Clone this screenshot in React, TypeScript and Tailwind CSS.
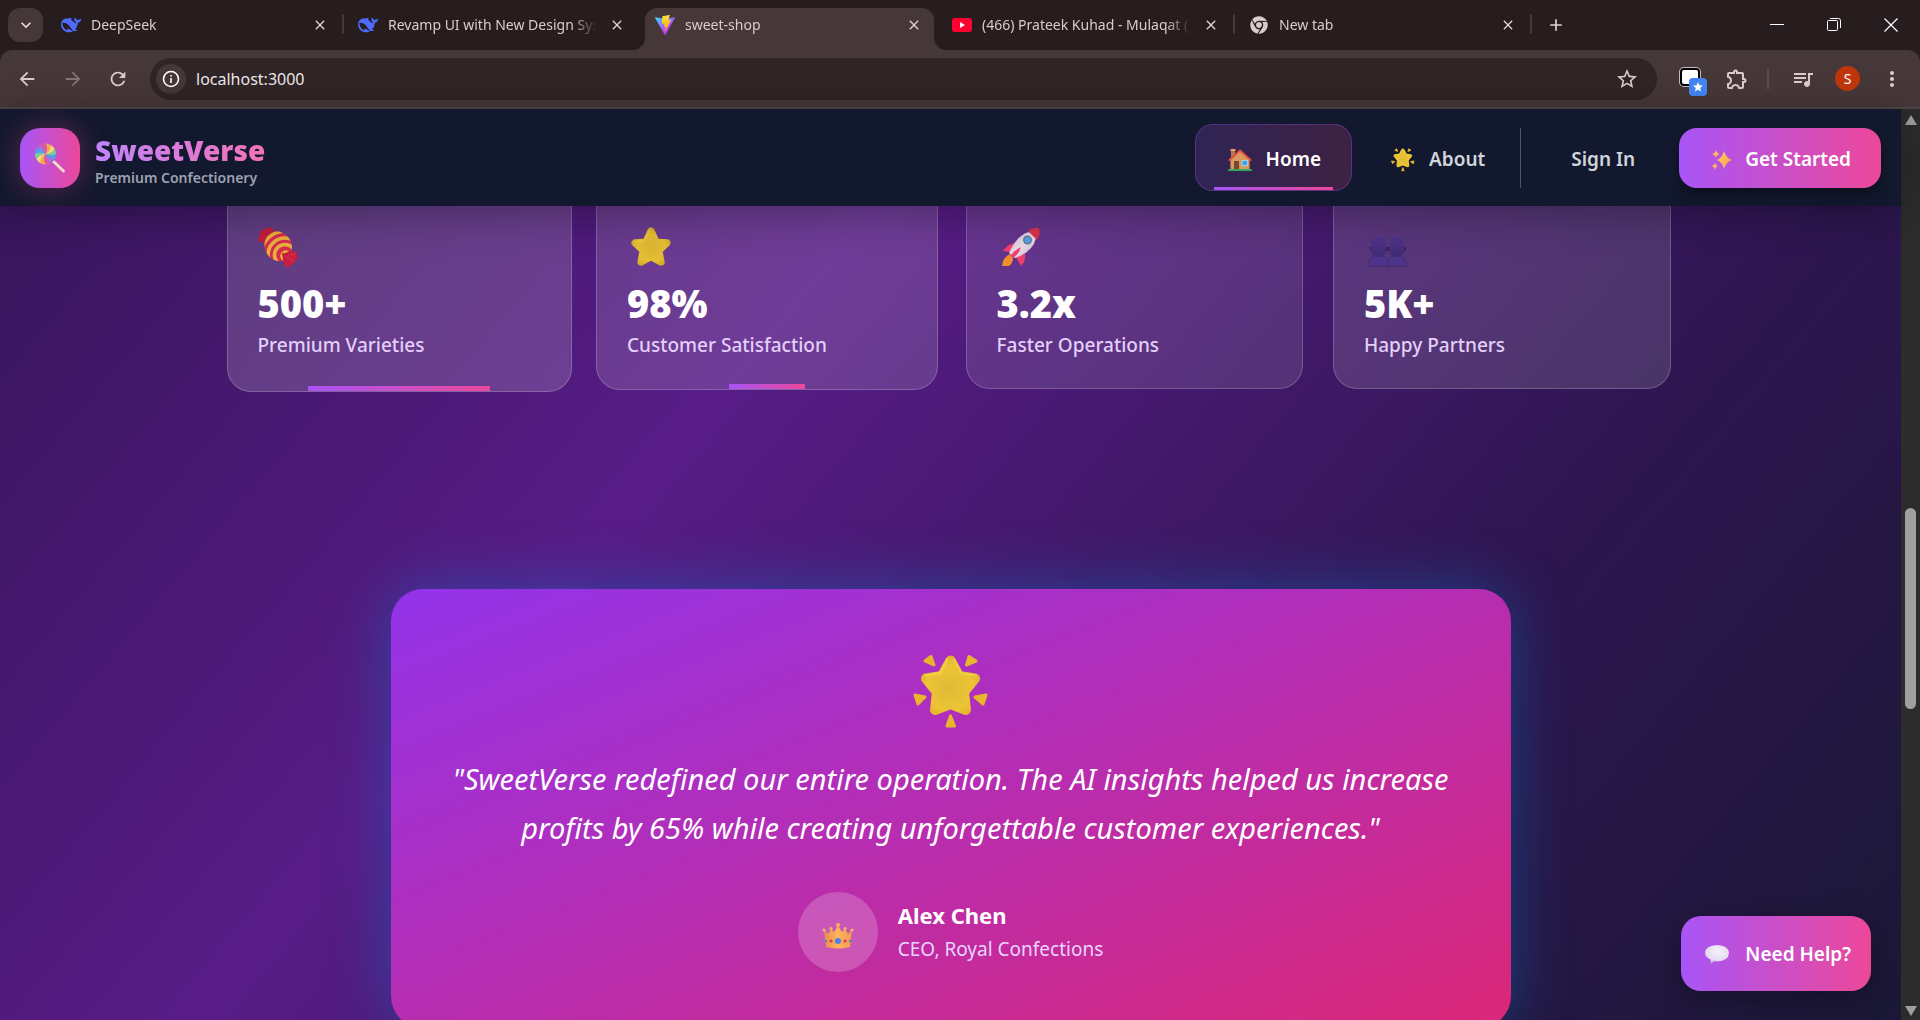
import React from "react";
import { FaChrome } from "react-icons/fa";
import {
  MdAdd,
  MdArrowBack,
  MdArrowForward,
  MdClose,
  MdExpandMore,
  MdMoreVert,
  MdOutlineExtension,
  MdQueueMusic,
  MdRefresh,
  MdStar,
  MdStarBorder,
} from "react-icons/md";

type IconProps = { className?: string };

/* ---------- Brand marks ---------- */

function WhaleIcon({ className }: IconProps) {
  return (
    <svg viewBox="0 0 24 24" className={className} fill="#4d6bfe" aria-hidden="true">
      <path d="M23.748 4.482c-.254-.124-.364.113-.512.234-.051.039-.094.09-.137.136-.372.397-.806.657-1.373.626-.829-.046-1.537.214-2.163.848-.133-.782-.575-1.248-1.247-1.548-.352-.156-.708-.311-.955-.65-.172-.241-.219-.51-.305-.774-.055-.16-.11-.323-.293-.35-.2-.031-.278.136-.356.276-.313.572-.434 1.202-.422 1.84.027 1.436.633 2.58 1.838 3.393.137.093.172.187.129.323-.082.28-.18.552-.266.833-.055.179-.137.217-.329.14a5.526 5.526 0 01-1.736-1.18c-.857-.828-1.631-1.742-2.597-2.458a11.365 11.365 0 00-.689-.471c-.985-.957.13-1.743.388-1.836.27-.098.093-.432-.779-.428-.872.004-1.67.295-2.687.684a3.055 3.055 0 01-.465.137 9.597 9.597 0 00-2.883-.102c-1.885.21-3.39 1.102-4.497 2.623C.082 8.606-.231 10.684.152 12.85c.403 2.284 1.569 4.175 3.36 5.653 1.858 1.533 3.997 2.284 6.438 2.14 1.482-.085 3.133-.284 4.994-1.86.47.234.962.327 1.78.397.63.059 1.236-.03 1.705-.128.735-.156.684-.837.419-.961-2.155-1.004-1.682-.595-2.113-.926 1.096-1.296 2.746-2.642 3.392-7.003.05-.347.007-.565 0-.845-.004-.17.035-.237.23-.256a4.173 4.173 0 001.545-.475c1.396-.763 1.96-2.015 2.093-3.517.02-.23-.004-.467-.247-.588zM11.581 18c-2.089-1.642-3.102-2.183-3.52-2.16-.392.024-.321.471-.235.763.09.288.207.486.371.739.114.167.192.416-.113.603-.673.416-1.842-.14-1.897-.167-1.361-.802-2.5-1.86-3.301-3.307-.774-1.393-1.224-2.887-1.298-4.482-.02-.386.093-.522.477-.592a4.696 4.696 0 011.529-.039c2.132.312 3.946 1.265 5.468 2.774.868.86 1.525 1.887 2.202 2.891.72 1.066 1.494 2.082 2.48 2.914.348.292.625.514.891.677-.802.09-2.14.11-3.054-.614z" />
    </svg>
  );
}

function ViteIcon({ className }: IconProps) {
  return (
    <svg viewBox="0 0 256 257" className={className} aria-hidden="true">
      <defs>
        <linearGradient id="vite-a" x1="0" x2=".58" y1=".08" y2=".78">
          <stop offset="0" stopColor="#41d1ff" />
          <stop offset="1" stopColor="#bd34fe" />
        </linearGradient>
        <linearGradient id="vite-b" x1=".43" x2=".5" y1=".02" y2=".89">
          <stop offset="0" stopColor="#ffea83" />
          <stop offset=".08" stopColor="#ffdd35" />
          <stop offset="1" stopColor="#ffa800" />
        </linearGradient>
      </defs>
      <path
        fill="url(#vite-a)"
        d="M255.153 37.938L134.897 252.976c-2.483 4.44-8.862 4.466-11.382.048L.875 37.958c-2.746-4.814 1.371-10.646 6.827-9.67l120.385 21.517a6.537 6.537 0 0 0 2.322-.004l117.867-21.483c5.438-.991 9.574 4.796 6.877 9.62Z"
      />
      <path
        fill="url(#vite-b)"
        d="M185.432.063L96.44 17.501a3.268 3.268 0 0 0-2.634 3.014l-5.474 92.456a3.268 3.268 0 0 0 3.997 3.378l24.777-5.718c2.318-.535 4.413 1.507 3.936 3.838l-7.361 36.047c-.495 2.426 1.782 4.5 4.151 3.78l15.304-4.649c2.372-.72 4.652 1.36 4.15 3.788l-11.698 56.621c-.732 3.542 3.979 5.473 5.943 2.437l1.313-2.028l72.516-144.72c1.215-2.423-.88-5.186-3.54-4.672l-25.505 4.922c-2.396.462-4.435-1.77-3.759-4.114l16.646-57.705c.677-2.35-1.37-4.583-3.769-4.113Z"
      />
    </svg>
  );
}

function YouTubeIcon({ className }: IconProps) {
  return (
    <svg viewBox="0 0 20 20" className={className} aria-hidden="true">
      <rect y="3" width="20" height="14" rx="3" fill="#ff0033" />
      <path d="M8 7l5 3-5 3z" fill="#fff" />
    </svg>
  );
}

/* ---------- Illustrated emoji ---------- */

const STAR = "M50 14L61 38L85 40L67 57L72 82L50 70L28 82L33 57L15 40L39 38Z";

function StarArt({ className }: IconProps) {
  return (
    <svg viewBox="6 6 88 86" className={className} aria-hidden="true">
      <defs>
        <radialGradient id="star-fill" gradientUnits="userSpaceOnUse" cx="50" cy="50" r="44">
          <stop offset="0" stopColor="#dab534" />
          <stop offset=".7" stopColor="#e6bf33" />
          <stop offset="1" stopColor="#d9aa2b" />
        </radialGradient>
      </defs>
      <path d={STAR} fill="url(#star-fill)" stroke="url(#star-fill)" strokeWidth="16" strokeLinejoin="round" />
      <path d="M47 12L36 35L13 38" fill="none" stroke="#f3d040" strokeWidth="4" strokeLinecap="round" opacity=".5" />
    </svg>
  );
}

function GlowingStarArt({ className }: IconProps) {
  return (
    <svg viewBox="0 0 76 76" className={className} aria-hidden="true">
      <defs>
        <radialGradient id="glow-fill" gradientUnits="userSpaceOnUse" cx="37" cy="34" r="33">
          <stop offset="0" stopColor="#dfba37" />
          <stop offset=".7" stopColor="#ecc435" />
          <stop offset="1" stopColor="#e0b02c" />
        </radialGradient>
      </defs>
      <path
        d="M37.500 6.500L46 22L62 24.500L51 38L53 56L37.500 50L22 56L24 38L13 24.500L29 22Z"
        fill="url(#glow-fill)"
        stroke="url(#glow-fill)"
        strokeWidth="10"
        strokeLinejoin="round"
      />
      <path d="M34.500 5L28 19L12 21.500" fill="none" stroke="#f8da50" strokeWidth="2" strokeLinecap="round" opacity=".6" />
      <path d="M41 5L48 19L63 21.500" fill="none" stroke="#f8da50" strokeWidth="2" strokeLinecap="round" opacity=".5" />
      <g fill="#e8b62c" stroke="#e8b62c" strokeWidth="3" strokeLinejoin="round">
        <path d="M12 7L18 2.500L21 11Z" />
        <path d="M63 7L56 2.500L53.500 11Z" />
        <path d="M2 41L12 43L5 50Z" />
        <path d="M73 41L62 43L70 50Z" />
        <path d="M37.500 62L34 72H41.500Z" />
      </g>
    </svg>
  );
}

function LollipopArt({ className }: IconProps) {
  const colors = ["#f2a94f", "#f6dc72", "#73d39a", "#4d9ff0", "#a46ee0", "#e0559b"];
  return (
    <svg viewBox="0 0 32 32" className={className} aria-hidden="true">
      <path d="M19 19L29.500 29" stroke="#f5dcc8" strokeWidth="2.800" strokeLinecap="round" />
      <circle cx="11.500" cy="12" r="10.500" fill="#cf6bb0" />
      {Array.from({ length: 12 }, (_, i) => (
        <path
          key={i}
          d="M11.500 12Q14.500 7 11.500 1.500Q14.500 1.500 16.900 3Q17 8 11.500 12Z"
          fill={colors[i % 6]}
          transform={`rotate(${i * 30} 11.5 12)`}
        />
      ))}
    </svg>
  );
}

function HouseArt({ className }: IconProps) {
  return (
    <svg viewBox="0 0 24 24" className={className} aria-hidden="true">
      <rect x="3" y="2" width="4" height="9" fill="#b9774f" />
      <rect x="2.500" y="1" width="5" height="2" fill="#f5a05a" />
      <path d="M2.500 11L12 3L21.500 11V21.500H2.500Z" fill="#d99a62" />
      <path d="M1.500 12L12 2.500L22.500 12" fill="none" stroke="#e2513f" strokeWidth="2" strokeLinecap="round" strokeLinejoin="round" />
      <rect x="6" y="13" width="5" height="8.500" fill="#75482f" />
      <rect x="14" y="12.500" width="5.500" height="5" fill="#35a3ee" stroke="#b5dcf5" strokeWidth=".8" />
      <rect x="0" y="21" width="24" height="2" rx="1" fill="#39a85e" />
    </svg>
  );
}

function SparklesArt({ className }: IconProps) {
  return (
    <svg viewBox="0 0 22 20" className={className} aria-hidden="true">
      <defs>
        <linearGradient id="spark" x1="0" x2="1" y1="0" y2="1">
          <stop offset="0" stopColor="#ffd35c" />
          <stop offset="1" stopColor="#fb9a55" />
        </linearGradient>
      </defs>
      <g fill="url(#spark)">
        <path d="M13 1Q15 8 21 10Q15 12 13 19Q11 12 6 10Q11 8 13 1Z" />
        <path d="M5 0Q6 3.500 9 4Q6 4.500 5 8Q4 4.500 1 4Q4 3.500 5 0Z" />
        <path d="M4 13Q5 15.500 7 16Q5 16.500 4 19.500Q3 16.500 1 16Q3 15.500 4 13Z" />
      </g>
    </svg>
  );
}

function CandyArt({ className }: IconProps) {
  return (
    <svg viewBox="0 0 40 40" className={className} aria-hidden="true">
      <defs>
        <clipPath id="candy-clip">
          <ellipse cx="20.500" cy="19.500" rx="13.500" ry="15" transform="rotate(-25 20 20)" />
        </clipPath>
      </defs>
      <path d="M2 4Q5 5 7 1Q10 0 15 1Q17 6 14 12L7 17Q5 14 1 15Q-1 11 2 10Q1 7 2 4Z" fill="#bf1f3e" />
      <g clipPath="url(#candy-clip)">
        <rect width="40" height="40" fill="#d62d50" />
        <g fill="none" stroke="#e9b03c" strokeWidth="3.600">
          <circle cx="28" cy="29" r="4" />
          <circle cx="27" cy="28" r="10.500" />
          <circle cx="27" cy="28" r="17" />
          <circle cx="27" cy="28" r="24" />
        </g>
      </g>
      <path d="M24 26Q28 27 31 24Q34 25 39 24Q38 27 40 30Q40 33 37 33Q38 37 34 37Q31 41 28 40Q25 35 25 32Z" fill="#c81f40" />
      <path d="M27 29L35 34M30 28L38 27" stroke="#e2485c" opacity=".6" />
    </svg>
  );
}

function RocketArt({ className }: IconProps) {
  return (
    <svg viewBox="0 0 40 40" className={className} aria-hidden="true">
      <defs>
        <linearGradient id="rocket" x1="0" x2="1" y1="0" y2="1">
          <stop offset="0" stopColor="#c9b9c9" />
          <stop offset=".5" stopColor="#e7dbe6" />
          <stop offset="1" stopColor="#cbb6cc" />
        </linearGradient>
      </defs>
      <path d="M9 27Q2 30 1 39Q4 39 8 39Q12 36 12 31Z" fill="#f08d2c" />
      <path d="M13 16Q6 18 2 24L11 25Z" fill="#f23d6f" />
      <path d="M24 27Q25 34 20 39L15 30Z" fill="#f23d6f" />
      <path d="M28 5Q16 8 8 26L14 31Q32 25 35 11Z" fill="url(#rocket)" />
      <path d="M27 4Q33 0 38 1Q40 7 36 13Z" fill="#d93349" />
      <path d="M20 20Q12 24 9 29L12 31Q18 27 20 20Z" fill="#f23d6f" />
      <circle cx="26.500" cy="13" r="4.500" fill="#6a7796" />
      <circle cx="26.500" cy="13" r="3" fill="#50a5ec" />
    </svg>
  );
}

function PeopleArt({ className }: IconProps) {
  return (
    <svg viewBox="0 0 40 40" className={className} aria-hidden="true">
      <defs>
        <linearGradient id="people" x1="0" x2="0" y1="0" y2="1">
          <stop offset="0" stopColor="#4f338b" />
          <stop offset="1" stopColor="#402b74" />
        </linearGradient>
      </defs>
      <path d="M1 20h4v4H3zM17 20h5v4h-4zM34 20h4v3l-3 1z" fill="#37235f" />
      <g fill="url(#people)">
        <rect x="3" y="10" width="15" height="20" rx="7" />
        <rect x="21" y="10" width="15" height="20" rx="7" />
      </g>
      <g fill="#4f348b" stroke="#3e2970" strokeWidth=".8">
        <path d="M1 39V35Q2 30 8 29H13Q20 30 20 35V39Z" />
        <path d="M20 39V35Q21 30 25 29H31Q37 30 38 35V39Z" />
      </g>
    </svg>
  );
}

function CrownArt({ className }: IconProps) {
  return (
    <svg viewBox="0 0 32 26" className={className} aria-hidden="true">
      <defs>
        <linearGradient id="crown" x1="0" x2="1" y1="0" y2="0">
          <stop offset="0" stopColor="#e78c4a" />
          <stop offset=".5" stopColor="#ffb45e" />
          <stop offset="1" stopColor="#f09a52" />
        </linearGradient>
      </defs>
      <path d="M2 7L6 11L9 6L12 9L16 3L20 9L23 6L26 11L30 7L28 24Q16 27 4 24Z" fill="url(#crown)" />
      <g fill="#f1b85f">
        <circle cx="2" cy="7" r="1.600" />
        <circle cx="9" cy="5.500" r="1.600" />
        <circle cx="16" cy="2" r="2" />
        <circle cx="23" cy="5.500" r="1.600" />
        <circle cx="30" cy="7" r="1.600" />
      </g>
      <circle cx="16" cy="18" r="3" fill="#4a83ee" />
      <circle cx="9" cy="18" r="1.600" fill="#dd3950" />
      <circle cx="23" cy="18" r="1.600" fill="#dd3950" />
      <circle cx="4" cy="18" r="1.200" fill="#389aa0" />
      <circle cx="28" cy="18" r="1.200" fill="#389aa0" />
    </svg>
  );
}

function SpeechArt({ className }: IconProps) {
  return (
    <svg viewBox="0 0 24 19" className={className} aria-hidden="true">
      <defs>
        <radialGradient id="speech" cx=".55" cy=".35" r=".7">
          <stop offset="0" stopColor="#f6f0fa" />
          <stop offset=".7" stopColor="#e4dcf0" />
          <stop offset="1" stopColor="#b9a9d6" />
        </radialGradient>
      </defs>
      <path d="M12 0Q23.500 .5 24 8Q23.500 16 12 16.500L9 16Q8 18 5 18.500Q6 16.500 5.500 14.500Q0 12 0 8Q.5 .5 12 0Z" fill="url(#speech)" />
    </svg>
  );
}

/* ---------- Browser frame ---------- */

type TabProps = { title: string; icon: React.ReactNode; active?: boolean; divider?: boolean };

function Tab({ title, icon, active, divider }: TabProps) {
  return (
    <div className="relative flex w-[297px] min-w-0 shrink pt-2">
      <div
        className={
          active
            ? "relative mx-1 flex h-[42px] min-w-0 flex-1 items-center rounded-t-xl bg-[#463739] pb-2 pl-2.5 pr-3"
            : "relative mx-1 flex h-[42px] min-w-0 flex-1 items-center pb-2 pl-2.5 pr-3"
        }
      >
        {active && (
          <>
            <span className="absolute -left-3 bottom-0 size-3 bg-[radial-gradient(circle_at_0_0,transparent_12px,#463739_12px)]" />
            <span className="absolute -right-3 bottom-0 size-3 bg-[radial-gradient(circle_at_100%_0,transparent_12px,#463739_12px)]" />
          </>
        )}
        {icon}
        <span className="ml-2.5 min-w-0 flex-1 overflow-hidden whitespace-nowrap text-sm text-[#dccbcd] [mask-image:linear-gradient(to_right,black_88%,transparent)]">
          {title}
        </span>
        <button type="button" aria-label={"Close " + title} className="ml-3 text-[#e3d3d5]">
          <MdClose className="size-4" />
        </button>
      </div>
      {divider && <span className="absolute right-0 top-3.5 h-5 w-0.5 rounded bg-[#463739]" />}
    </div>
  );
}

function TabStrip() {
  return (
    <div className="flex h-[50px] items-start bg-[#271c1e]">
      <button
        type="button"
        aria-label="Search tabs"
        className="ml-2 mr-1 mt-2 flex h-[34px] w-[35px] shrink-0 items-center justify-center rounded-xl bg-[#463739] text-[#eadcde]"
      >
        <MdExpandMore className="size-5" />
      </button>
      <Tab title="DeepSeek" icon={<WhaleIcon className="size-5 shrink-0" />} divider />
      <Tab title="Revamp UI with New Design Sys" icon={<WhaleIcon className="size-5 shrink-0" />} />
      <Tab title="sweet-shop" icon={<ViteIcon className="size-5 shrink-0" />} active />
      <Tab title="(466) Prateek Kuhad - Mulaqat (" icon={<YouTubeIcon className="size-5 shrink-0" />} divider />
      <Tab title="New tab" icon={<FaChrome className="mx-px size-[18px] shrink-0 text-[#dccbcd]" />} divider />
      <button type="button" aria-label="New tab" className="ml-3.5 mt-[15px] text-[#e3d3d5]">
        <MdAdd className="size-5" />
      </button>
      <div className="ml-auto mr-[18px] flex gap-[35px] pt-3.5 text-white">
        <button type="button" aria-label="Minimize">
          <svg viewBox="0 0 22 22" className="size-[22px]" aria-hidden="true">
            <path d="M4 10.500h14" stroke="currentColor" />
          </svg>
        </button>
        <button type="button" aria-label="Restore">
          <svg viewBox="0 0 22 22" className="size-[22px]" fill="none" stroke="currentColor" aria-hidden="true">
            <rect x="4.500" y="6.500" width="10" height="10" rx="1" />
            <path d="M7 4.500h8.500a2 2 0 0 1 2 2V14" />
          </svg>
        </button>
        <button type="button" aria-label="Close window">
          <svg viewBox="0 0 22 22" className="size-[22px]" aria-hidden="true">
            <path d="M4.500 4.500l13 13M17.500 4.500l-13 13" stroke="currentColor" strokeWidth="1.200" />
          </svg>
        </button>
      </div>
    </div>
  );
}

function Toolbar() {
  return (
    <div className="bg-[#271c1e]">
      <div className="flex h-[59px] items-center rounded-t-xl border-b-2 border-[#4b4545] bg-[#463739] pl-4 text-[#dccbcd]">
        <button type="button" aria-label="Back">
          <MdArrowBack className="size-[22px]" />
        </button>
        <button type="button" aria-label="Forward" className="ml-6 text-[#857476]">
          <MdArrowForward className="size-[22px]" />
        </button>
        <button type="button" aria-label="Reload" className="ml-[23px]">
          <MdRefresh className="size-[22px]" />
        </button>
        <div className="ml-[21px] flex h-[42px] flex-1 items-center rounded-full bg-[#2f2426] pl-1.5 pr-[18px]">
          <button
            type="button"
            aria-label="Site information"
            className="flex size-[30px] shrink-0 items-center justify-center rounded-full bg-[#463739] text-white"
          >
            <svg viewBox="0 0 18 18" className="size-[18px]" fill="none" stroke="currentColor" strokeWidth="1.600" aria-hidden="true">
              <circle cx="9" cy="9" r="7.500" />
              <path d="M9 8v5M9 5v1.600" />
            </svg>
          </button>
          <input
            type="text"
            aria-label="Address"
            defaultValue="localhost:3000"
            className="ml-2.5 min-w-0 flex-1 bg-transparent text-base text-[#efe6e7] outline-none"
          />
          <button type="button" aria-label="Bookmark this page">
            <MdStarBorder className="size-6" />
          </button>
        </div>
        <button type="button" aria-label="Reading extension" className="relative ml-[22px] size-[26px]">
          <span className="absolute left-px top-0.5 h-[18px] w-5 rounded-sm border-2 border-black bg-white ring-1 ring-[#c9bcbe]" />
          <span className="absolute -bottom-1 -right-0.5 flex h-[18px] w-[18px] items-center justify-center rounded bg-[#4285f4] text-white">
            <MdStar className="size-3" />
          </span>
        </button>
        <button type="button" aria-label="Extensions" className="ml-5">
          <MdOutlineExtension className="size-6" />
        </button>
        <span className="ml-[18px] h-5 w-0.5 bg-[#5f4d50]" />
        <button type="button" aria-label="Media controls" className="ml-[22px]">
          <MdQueueMusic className="size-6" />
        </button>
        <button
          type="button"
          aria-label="Profile"
          className="ml-5 flex size-[25px] items-center justify-center rounded-full bg-[#bf360c] text-sm text-white"
        >
          S
        </button>
        <button type="button" aria-label="Menu" className="ml-5 mr-4">
          <MdMoreVert className="size-6" />
        </button>
      </div>
    </div>
  );
}

/* ---------- Sweet shop page ---------- */

function SiteHeader() {
  return (
    <header className="relative z-10 flex h-[97px] shrink-0 items-center justify-between bg-[#12182d] px-5 shadow-[0_8px_40px_rgba(0,0,0,0.3)]">
      <a href="#top" className="flex items-center gap-[15px]">
        <span className="flex size-[60px] items-center justify-center rounded-[20px] bg-linear-to-r/srgb from-[#a855f7] to-[#ec4899] shadow-[0_0_30px_rgba(236,72,153,0.35)]">
          <LollipopArt className="size-8" />
        </span>
        <span className="flex flex-col pt-2">
          <span className="bg-linear-to-r/srgb from-[#c084fc] to-[#f472b6] bg-clip-text text-[28px] font-black leading-8 text-transparent">
            SweetVerse
          </span>
          <span className="text-sm font-semibold leading-6 text-[#9ca3af]">Premium Confectionery</span>
        </span>
      </a>
      <nav className="flex items-center text-[19px] font-semibold">
        <a
          href="#home"
          className="relative flex h-[67px] items-center gap-3.5 rounded-[18px] border border-[#a855f7]/30 bg-linear-to-r/srgb from-[#a855f7]/20 to-[#ec4899]/20 pl-8 pr-[30px] pt-1 text-white"
        >
          <HouseArt className="size-6" />
          Home
          <span className="absolute inset-x-[18px] bottom-0 h-[3px] bg-linear-to-r/srgb from-[#a855f7] to-[#ec4899]" />
        </a>
        <a href="#about" className="ml-2 flex h-[67px] items-center gap-3.5 px-[31px] pt-1 text-[#d1d5db]">
          <GlowingStarArt className="size-6" />
          About
        </a>
        <span className="ml-1 h-[60px] w-px bg-gray-600" />
        <a href="#signin" className="ml-[18px] flex h-[60px] items-center px-8 pt-1 text-[#d1d5db]">
          Sign In
        </a>
        <button
          type="button"
          className="ml-3 flex h-[60px] items-center gap-3 rounded-[18px] bg-linear-to-r/srgb from-[#a855f7] to-[#ec4899] pl-8 pr-[30px] pt-1 text-white shadow-lg shadow-black/30"
        >
          <SparklesArt className="h-5 w-[22px]" />
          Get Started
        </button>
      </nav>
    </header>
  );
}

type StatProps = { art: React.ReactNode; value: string; label: string; className: string; bar?: string };

function StatCard({ art, value, label, className, bar }: StatProps) {
  return (
    <article className={"relative overflow-hidden rounded-3xl border border-white/20 px-[30px] pt-10 " + className}>
      {art}
      <p className="mt-3.5 text-[38px] font-black leading-11 text-white">{value}</p>
      <p className="mt-1 text-[19px] font-medium leading-8 text-[#e3cffa]">{label}</p>
      {bar && (
        <span
          className={
            "absolute bottom-0 left-1/2 h-[5px] -translate-x-1/2 bg-linear-to-r/srgb from-[#a855f7] to-[#ec4899] " + bar
          }
        />
      )}
    </article>
  );
}

function Stats() {
  return (
    <section aria-label="Results" className="mx-auto -mt-5 grid w-full max-w-[1440px] grid-cols-4 items-start gap-[30px]">
      <StatCard
        art={<CandyArt className="size-10" />}
        value="500+"
        label="Premium Varieties"
        className="-mx-1 bg-white/16 pb-[30px]"
        bar="w-[182px]"
      />
      <StatCard
        art={<StarArt className="ml-1 size-10" />}
        value="98%"
        label="Customer Satisfaction"
        className="-mx-0.5 bg-white/14 pb-7"
        bar="w-[76px]"
      />
      <StatCard
        art={<RocketArt className="ml-1 size-10" />}
        value="3.2x"
        label="Faster Operations"
        className="bg-white/11 pb-[27px]"
      />
      <StatCard
        art={<PeopleArt className="ml-1 size-10" />}
        value="5K+"
        label="Happy Partners"
        className="bg-white/13 pb-[27px]"
      />
    </section>
  );
}

function Testimonial() {
  return (
    <section className="mx-auto mt-[197px] flex w-full max-w-[1120px] flex-col items-center rounded-[32px] bg-linear-to-br/srgb from-[#9333ea] to-[#db2777] pb-14 pt-[65px] text-white shadow-[0_0_60px_rgba(6,130,212,0.4)]">
      <GlowingStarArt className="size-[76px]" />
      <blockquote className="mt-6 text-center text-[29px] italic leading-[49px]">
        "SweetVerse redefined our entire operation. The AI insights helped us increase
        <br />
        profits by 65% while creating unforgettable customer experiences."
      </blockquote>
      <div className="mt-10 flex items-center gap-5">
        <span className="flex size-20 items-center justify-center rounded-full bg-white/20">
          <CrownArt className="mt-2 h-[26px] w-8" />
        </span>
        <div>
          <p className="text-[22px] font-bold leading-8">Alex Chen</p>
          <p className="mt-0.5 text-[19px] leading-8 text-[#e9d5ff]">CEO, Royal Confections</p>
        </div>
      </div>
    </section>
  );
}

function ScrollBar() {
  return (
    <div aria-hidden="true" className="flex w-[19px] shrink-0 flex-col items-center bg-[#2c2c2c]">
      <span className="mt-1.5 border-x-6 border-b-10 border-x-transparent border-b-[#9f9f9f]" />
      <div className="flex w-full flex-1 flex-col items-center">
        <span className="flex-[383_0_0]" />
        <span className="w-[11px] flex-[201_0_0] rounded-full bg-[#9f9f9f]" />
        <span className="flex-[297_0_0]" />
      </div>
      <span className="mb-1 border-x-6 border-t-10 border-x-transparent border-t-[#9f9f9f]" />
    </div>
  );
}

export default function App() {
  return (
    <div className="flex h-screen flex-col overflow-hidden font-['Noto_Sans','Open_Sans',sans-serif]">
      <TabStrip />
      <Toolbar />
      <div className="flex min-h-0 flex-1">
        <div className="relative flex min-w-0 flex-1 flex-col bg-[linear-gradient(130deg,#341558_0%,#581c87_36%,#2e1650_72%,#1a1836_100%)]">
          <SiteHeader />
          <main className="min-h-0 flex-1 overflow-hidden">
            <Stats />
            <Testimonial />
          </main>
          <button
            type="button"
            className="absolute bottom-[29px] right-[30px] flex h-[75px] items-center gap-4 rounded-[20px] bg-linear-to-r/srgb from-[#a855f7] to-[#ec4899] pl-6 pr-5 pt-0.5 text-[19px] font-semibold text-white shadow-[0_8px_30px_rgba(0,0,0,0.3)]"
          >
            <SpeechArt className="h-[19px] w-6" />
            Need Help?
          </button>
        </div>
        <ScrollBar />
      </div>
    </div>
  );
}
